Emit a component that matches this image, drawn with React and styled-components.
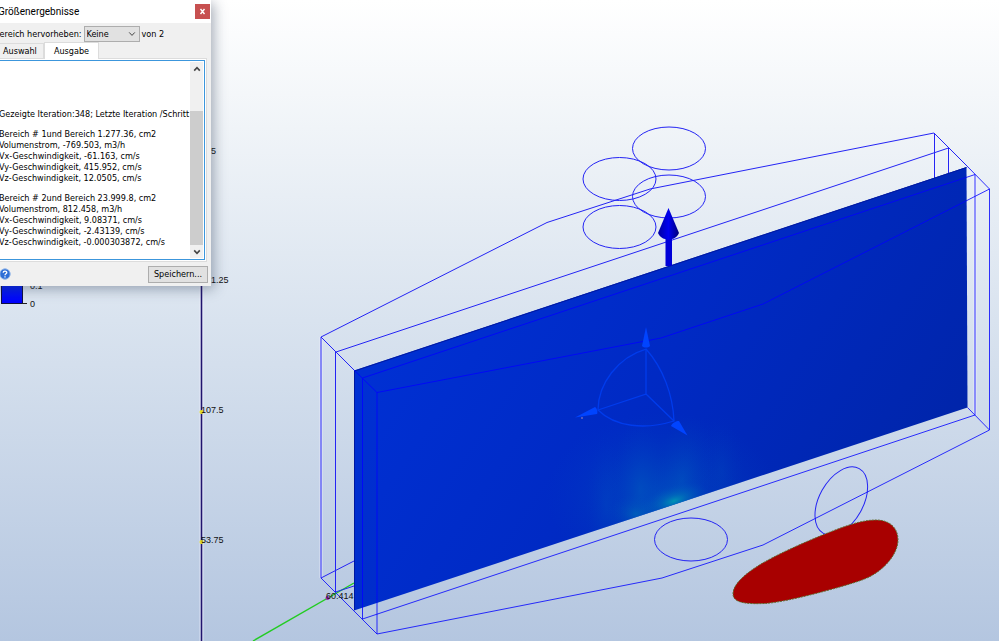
import React, { useState } from "react";
import styled, { createGlobalStyle } from "styled-components";

const GlobalStyle = createGlobalStyle`
  * {
    box-sizing: border-box;
  }
  body {
    margin: 0;
    color: #000;
    font-family: "DejaVu Sans Condensed", "DejaVu Sans", sans-serif;
    font-size: 9px;
    line-height: 12px;
  }
  button,
  select {
    font: inherit;
    color: inherit;
  }
`;

const Viewport = styled.main`
  position: relative;
  min-height: 100vh;
  overflow: hidden;
  background: linear-gradient(#ffffff 0%, #f0f4f8 20%, #d9e3ef 50%, #b4c6e0 100%);
`;

const Drawing = styled.svg`
  display: block;
  width: 100%;
  height: auto;

  text {
    font-family: "Liberation Sans", Arial, sans-serif;
    font-size: 9px;
    fill: #111;
  }
`;

const Dialog = styled.section`
  position: absolute;
  top: 0;
  left: -10px;
  display: flex;
  flex-direction: column;
  width: 221px;
  background: #f0f0f0;
  box-shadow: 3px 3px 12px rgba(40, 55, 80, 0.4);
`;

const TitleBar = styled.header`
  display: flex;
  align-items: center;
  justify-content: space-between;
  height: 23px;
  padding: 0 1px 0 8px;
  background: #fff;

  h1 {
    margin: 0;
    font-family: Roboto, sans-serif;
    font-size: 10px;
    font-weight: normal;
  }
`;

const CloseButton = styled.button`
  width: 15px;
  height: 15px;
  padding: 0;
  border: 0;
  background: #c75050;
  display: grid;
  place-items: center;
`;

const FilterRow = styled.div`
  display: flex;
  align-items: center;
  gap: 2px;
  height: 20px;
  padding-left: 4px;
  margin-top: 1px;
  white-space: nowrap;
`;

const SelectBox = styled.span`
  display: grid;
  align-items: center;

  select,
  svg {
    grid-area: 1 / 1;
  }
  svg {
    justify-self: end;
    margin-right: 4px;
    pointer-events: none;
  }
  select {
    appearance: none;
    width: 56px;
    height: 16px;
    padding: 0 2px;
    border: 1px solid #adadad;
    border-radius: 0;
    background: #e1e1e1;
  }
`;

const TabList = styled.div`
  display: flex;
  align-items: flex-end;
  height: 14px;
  padding-left: 4px;
`;

const Tab = styled.button`
  position: relative;
  height: ${(p) => (p.$active ? 17 : 15)}px;
  width: ${(p) => (p.$active ? 55 : 50)}px;
  margin-bottom: ${(p) => (p.$active ? -1 : 0)}px;
  padding: ${(p) => (p.$active ? "0" : "0 0 0 8px")};
  text-align: ${(p) => (p.$active ? "center" : "left")};
  border: 1px solid #dcdcdc;
  border-bottom: 0;
  background: ${(p) => (p.$active ? "#fff" : "#f0f0f0")};
`;

const TabPanel = styled.div`
  margin-right: 4px;
  padding: 1px 1px 1px 0;
  border: 1px solid #dcdcdc;
  background: #fff;
`;

const OutputFrame = styled.div`
  display: grid;
  grid-template-columns: 1fr 14px;
  height: 200px;
  border: 1px solid #3c96dc;
  background: #fff;
`;

const Output = styled.div`
  display: flex;
  flex-direction: column;
  gap: 9px;
  padding: 48px 0 0 7px;
  overflow: hidden;
  line-height: 11px;
  white-space: nowrap;

  p {
    margin: 0;
  }
`;

const ScrollBar = styled.div`
  display: flex;
  flex-direction: column;
  margin: 1px 1px 1px 0;
  background: #f0f0f0;
`;

const ScrollButton = styled.button`
  display: grid;
  place-items: center;
  height: 13px;
  padding: 0;
  border: 0;
  background: #f0f0f0;
`;

const ScrollTrack = styled.div`
  display: flex;
  flex: 1;
  align-items: flex-end;
`;

const ScrollThumb = styled.div`
  width: 100%;
  height: 79%;
  background: #cdcdcd;
`;

const Footer = styled.footer`
  display: flex;
  align-items: center;
  justify-content: space-between;
  height: 24px;
  padding: 0 3px 0 9px;
`;

const HelpButton = styled.button`
  display: grid;
  padding: 0;
  border: 0;
  background: none;
`;

const SaveButton = styled.button`
  width: 60px;
  height: 17px;
  padding: 0;
  border: 1px solid #adadad;
  background: #e1e1e1;
`;

const results = [
  ["Gezeigte Iteration:348; Letzte Iteration /Schritt"],
  [
    "Bereich # 1und Bereich 1.277.36, cm2",
    "Volumenstrom, -769.503, m3/h",
    "Vx-Geschwindigkeit, -61.163, cm/s",
    "Vy-Geschwindigkeit, 415.952, cm/s",
    "Vz-Geschwindigkeit, 12.0505, cm/s",
  ],
  [
    "Bereich # 2und Bereich 23.999.8, cm2",
    "Volumenstrom, 812.458, m3/h",
    "Vx-Geschwindigkeit, 9.08371, cm/s",
    "Vy-Geschwindigkeit, -2.43139, cm/s",
    "Vz-Geschwindigkeit, -0.000303872, cm/s",
  ],
];

const inlets = [
  [669, 148.5],
  [619.5, 179],
  [669, 196.5],
  [619.5, 227],
  [691, 539.5],
];

const Chevron = ({ up, color = "#444", width = 1.6 }) => (
  <svg width="8" height="6" viewBox="0 0 8 6" aria-hidden="true">
    <path
      d={up ? "M1.2 4.6 4 1.6l2.8 3" : "M1.2 1.4 4 4.4l2.8-3"}
      fill="none"
      stroke={color}
      strokeWidth={width}
    />
  </svg>
);

const Model = () => (
  <Drawing viewBox="0 0 999 641" role="img" aria-label="Strömungsmodell">
    <defs>
      <linearGradient id="plane" x1="0" y1="0.2" x2="1" y2="0.7">
        <stop offset="0" stopColor="#0032d8" />
        <stop offset="0.5" stopColor="#002ac4" />
        <stop offset="1" stopColor="#0024a6" />
      </linearGradient>
      <radialGradient id="glow">
        <stop offset="0" stopColor="#009cb4" stopOpacity="0.9" />
        <stop offset="0.35" stopColor="#0080b8" stopOpacity="0.5" />
        <stop offset="1" stopColor="#0050c0" stopOpacity="0" />
      </radialGradient>
      <radialGradient id="haze">
        <stop offset="0" stopColor="#0068c0" stopOpacity="0.5" />
        <stop offset="1" stopColor="#0040c0" stopOpacity="0" />
      </radialGradient>
      <linearGradient id="cone">
        <stop offset="0" stopColor="#0000a0" />
        <stop offset="0.5" stopColor="#0000f0" />
        <stop offset="1" stopColor="#000078" />
      </linearGradient>
      <linearGradient id="legend" x1="0" y1="0" x2="0" y2="1">
        <stop offset="0" stopColor="#0038e0" />
        <stop offset="1" stopColor="#0000ff" />
      </linearGradient>
      <clipPath id="planeClip">
        <path d="M354 370.5 966.5 167 967.5 407.5 354 610.5Z" />
      </clipPath>
    </defs>

    {/* colour legend */}
    <rect x="1.5" y="270.5" width="21" height="33" fill="url(#legend)" stroke="#101040" />
    <path d="M22 303.5h5" stroke="#222" />
    <text x="30" y="289">0.1</text>
    <text x="30" y="307">0</text>

    {/* axes */}
    <path d="M201.5 0V641" stroke="#f4f4ff" strokeOpacity="0.6" strokeWidth="4" />
    <path d="M201.5 0V641" stroke="#20146e" strokeWidth="1.6" />
    <path d="M253 641 354 583" stroke="#22cc22" strokeWidth="1.4" />
    <circle cx="201.5" cy="412" r="2" fill="#e6e020" />
    <circle cx="201.5" cy="542" r="2" fill="#e6e020" />
    <text x="201" y="154">215</text>
    <text x="201" y="283">161.25</text>
    <text x="201" y="413">107.5</text>
    <text x="201" y="543">53.75</text>

    {/* far side of the housing */}
    <g fill="none" stroke="#f2f4ff" strokeOpacity="0.6" strokeWidth="3">
      <path d="M321 337V578M934 133V180M948.5 148V174M975 174V415" />
    </g>
    <g fill="none" stroke="#2424f4">
      <path d="M321 337 547 222.5 650 189 934 133" />
      <path d="M336 352 948.5 148" />
      <path d="M321 337V578L354 561M335.5 352V592L354 586" />
      <path d="M934.5 133V180M948.5 148V174" />
      <path d="M321 337 354 370M934 133 967 166" />
      {inlets.map(([cx, cy]) => (
        <ellipse key={`${cx}-${cy}`} cx={cx} cy={cy} rx="36.5" ry="21.5" />
      ))}
      <ellipse cx="841.3" cy="501" rx="22" ry="37" transform="rotate(29 841.3 501)" />
    </g>

    {/* result plane */}
    <g clipPath="url(#planeClip)">
      <rect x="350" y="160" width="620" height="460" fill="url(#plane)" />
      <ellipse cx="662" cy="496" rx="116" ry="84" fill="url(#haze)" />
      <ellipse cx="682" cy="480" rx="30" ry="66" fill="url(#haze)" opacity="0.6" transform="rotate(10 682 480)" />
      <ellipse cx="640" cy="490" rx="28" ry="72" fill="url(#haze)" opacity="0.6" />
      <ellipse cx="606" cy="506" rx="20" ry="70" fill="url(#haze)" opacity="0.3" />
      <ellipse cx="722" cy="470" rx="22" ry="56" fill="url(#haze)" opacity="0.25" />
      <ellipse cx="674" cy="501" rx="36" ry="16" fill="url(#glow)" transform="rotate(-18 674 501)" />
      <ellipse cx="636" cy="514" rx="30" ry="20" fill="url(#glow)" opacity="0.35" />
    </g>
    <path d="M354.5 610V371L966.5 167.5" fill="none" stroke="#0018a0" />

    {/* near side of the housing */}
    <g fill="none" stroke="#0000ff" strokeOpacity="0.8">
      <path d="M362.5 378 975 174.5V415L362.5 619Z" />
      <path d="M377 392.5 661 338 763 304 989.5 189V430L763 545 662 578 377 634Z" />
      <path d="M354 370 377 392.5M967 166 989.5 189M967.5 407.5 989.5 430" />
      <path d="M321 578 377 634" />
    </g>

    {/* outlet */}
    <path
      d="M733 594C733 583 748 572 761 564C780 553 803 543 825 534C843 527 860 520 876 520C890 520 898 528 898 540C898 555 882 573 862 580C842 587 788 602 765 603.5C750 604 733 604 733 594Z"
      fill="#a80000"
      stroke="#5f6a2c"
      strokeDasharray="2 1"
    />

    {/* normal arrow */}
    <rect x="665.5" y="236" width="6.5" height="30" fill="#0000d8" />
    <path d="M668.5 208 679 233C677 237.5 673 239.5 668.5 239.5S660 237.5 658 233Z" fill="url(#cone)" />

    {/* triad */}
    <g fill="none" stroke="#003cec" strokeWidth="1.3">
      <path d="M646 349V394L598 410M646 394 674 421" />
      <path d="M646 349C618 357 598 384 598 410C615 427 645 430 674 421C673 395 663 368 646 349Z" />
    </g>
    <g fill="#0044ff">
      <path d="M646 327 650 346C648 348 644 348 642 346Z" />
      <path d="M575 417.5 595 407C597 408 598 412 597 414Z" />
      <path d="M687.5 435.5 671 426C672 423 676 421 679 421Z" />
    </g>
    <circle cx="582" cy="418" r="1" fill="#6a6ac0" />

    <circle cx="327.5" cy="598" r="2" fill="#9a28b4" />
    <text x="326" y="599">60.414</text>
  </Drawing>
);

const App = () => {
  const [tab, setTab] = useState("Ausgabe");

  return (
    <>
      <GlobalStyle />
      <Viewport>
        <Model />
        <Dialog aria-labelledby="dialog-title">
          <TitleBar>
            <h1 id="dialog-title">Größenergebnisse</h1>
            <CloseButton aria-label="Schließen">
              <svg width="7" height="7" viewBox="0 0 7 7" aria-hidden="true">
                <path d="M1.5 1l4 5M5.5 1l-4 5" stroke="#fff" strokeWidth="1.4" />
              </svg>
            </CloseButton>
          </TitleBar>
          <FilterRow>
            <label htmlFor="region">Bereich hervorheben:</label>
            <SelectBox>
              <select id="region" defaultValue="Keine">
                <option>Keine</option>
                <option>1</option>
                <option>2</option>
              </select>
              <Chevron width={1} />
            </SelectBox>
            <span>von 2</span>
          </FilterRow>
          <TabList role="tablist">
            {["Auswahl", "Ausgabe"].map((name) => (
              <Tab
                key={name}
                role="tab"
                aria-selected={tab === name}
                $active={tab === name}
                onClick={() => setTab(name)}
              >
                {name}
              </Tab>
            ))}
          </TabList>
          <TabPanel role="tabpanel" aria-label={tab}>
            <OutputFrame>
              <Output tabIndex={0}>
                {results.map((lines) => (
                  <p key={lines[0]}>
                    {lines.map((line) => (
                      <React.Fragment key={line}>
                        {line}
                        <br />
                      </React.Fragment>
                    ))}
                  </p>
                ))}
              </Output>
              <ScrollBar>
                <ScrollButton aria-label="Nach oben">
                  <Chevron up />
                </ScrollButton>
                <ScrollTrack>
                  <ScrollThumb />
                </ScrollTrack>
                <ScrollButton aria-label="Nach unten">
                  <Chevron />
                </ScrollButton>
              </ScrollBar>
            </OutputFrame>
          </TabPanel>
          <Footer>
            <HelpButton aria-label="Hilfe">
              <svg width="12" height="12" viewBox="0 0 12 12" aria-hidden="true">
                <circle cx="6" cy="6" r="5.2" fill="#2f6fd6" stroke="#8fb4e8" />
                <path
                  d="M4.2 4.7C4.2 2.6 7.8 2.6 7.8 4.6C7.8 5.8 6 5.8 6 7.2M6 8.2V9.4"
                  fill="none"
                  stroke="#fff"
                  strokeWidth="1.3"
                />
              </svg>
            </HelpButton>
            <SaveButton>Speichern...</SaveButton>
          </Footer>
        </Dialog>
      </Viewport>
    </>
  );
};

export default App;
